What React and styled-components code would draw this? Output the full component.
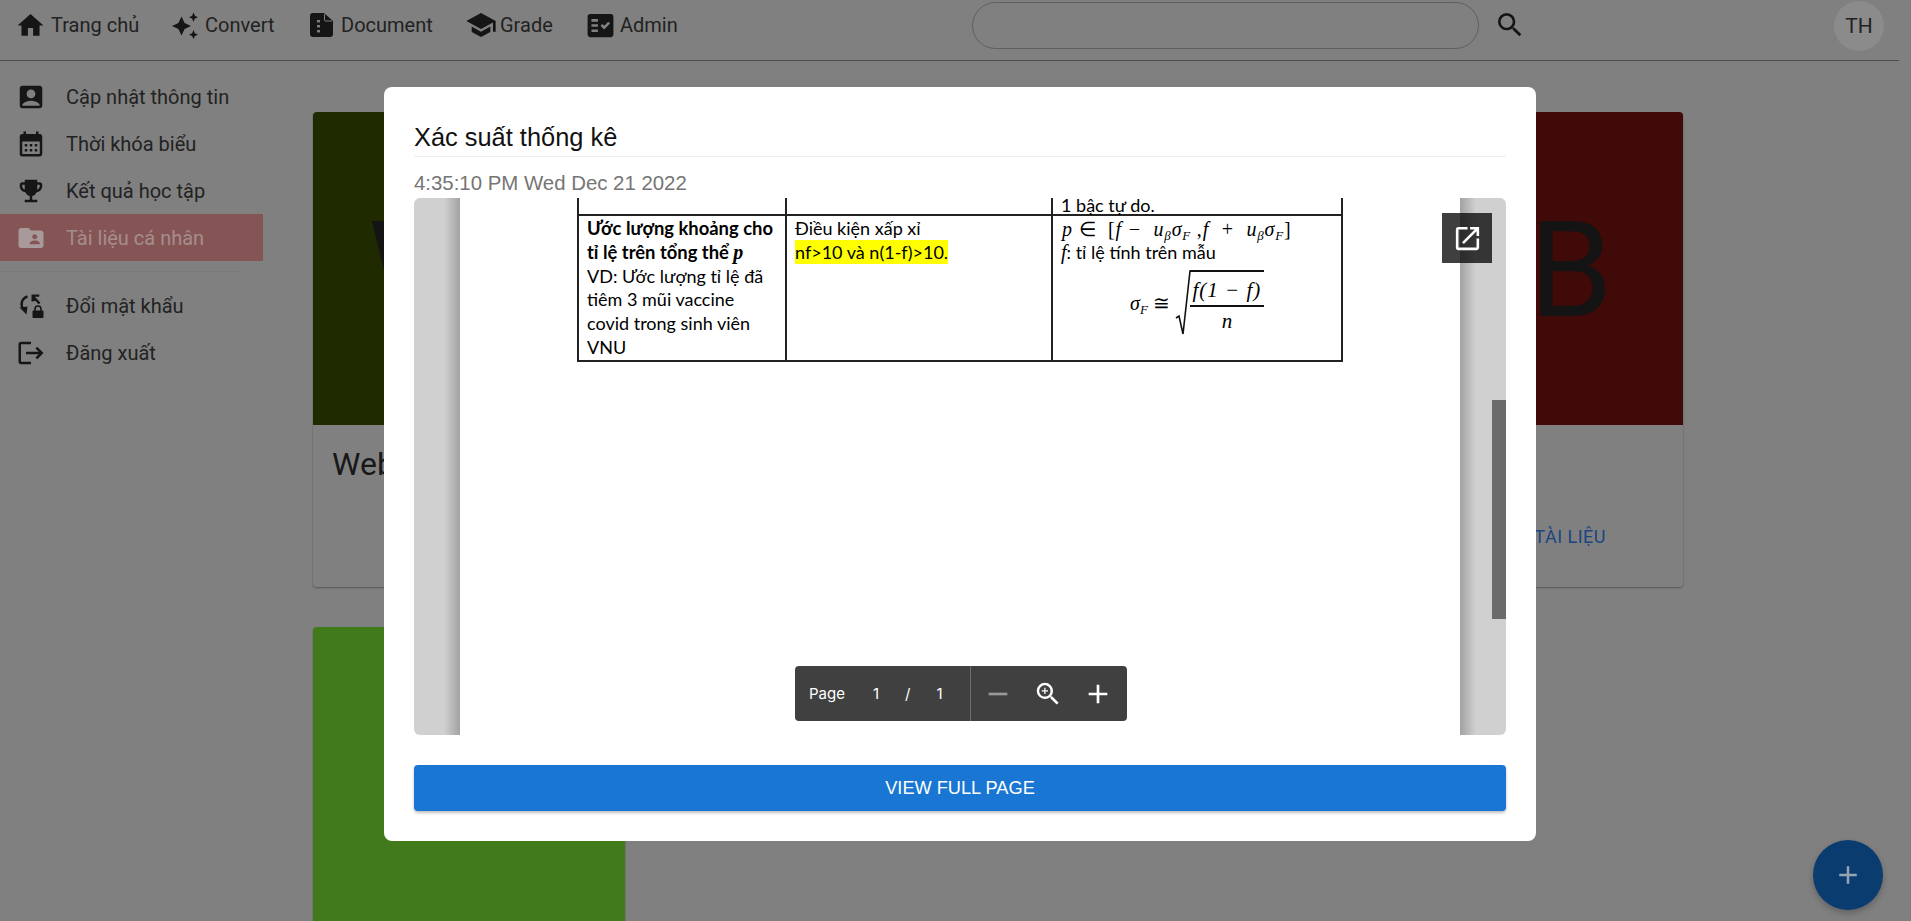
import React from "react";
import styled, { createGlobalStyle } from "styled-components";
import {
  MdHome, MdSchool, MdFactCheck, MdAccountBox, MdCalendarMonth,
  MdEmojiEvents, MdFolderShared, MdLogout, MdSearch, MdOpenInNew, MdZoomIn, MdRemove, MdAdd,
} from "react-icons/md";

const Global = createGlobalStyle`
  html, body { margin: 0; padding: 0; height: 100%; overflow: hidden; background: #808080; }
  * { box-sizing: border-box; }
  body { font-family: "Roboto", sans-serif; }
`;
const Page = styled.div`width: 1911px; height: 921px; overflow: hidden; display: flex; flex-direction: column;`;
const TopBar = styled.header`
  height: 61px; width: 1899px; flex: none; display: flex; align-items: center; padding: 0 0 10px 15px;
  border-bottom: 1px solid #4d4d4d;
`;
const NavGroup = styled.div`width: 957px; flex: none; display: flex; align-items: center;`;
const NavItem = styled.div`
  display: flex; align-items: center; width: ${p => p.$w}px; flex: none;
  color: #222; font: 400 20px "Roboto", sans-serif;
`;
const IconSlot = styled.span`
  display: flex; align-items: center; width: ${p => p.$w}px; flex: none; color: #151515;
  font-size: ${p => p.$size ?? 30}px;
`;
const SearchBox = styled.div`
  width: 507px; height: 47px; margin-top: 1px; flex: none;
  border: 1px solid #5f5f5f; border-radius: 24px;
`;
const SearchIcon = styled(MdSearch)`font-size: 32px; color: #141414; margin-left: 15px; flex: none;`;
const Avatar = styled.div`
  width: 50px; height: 50px; border-radius: 50%; background: #8b8b8b; color: #222; margin-left: 308px; margin-top: 1px;
  display: flex; align-items: center; justify-content: center; font: 400 21px "Roboto", sans-serif; flex: none;
`;
const Body = styled.div`flex: 1; display: flex; min-height: 0;`;
const Side = styled.nav`width: 313px; flex: none; padding-top: 12px;`;
const SideRow = styled.div`
  width: 263px; height: 47px; display: flex; align-items: center; padding-left: 16px; gap: 20px;
  font: 400 20px "Roboto", sans-serif; color: ${p => p.$active ? "#a58d8d" : "#222"};
  background: ${p => p.$active ? "#855555" : "transparent"};
  svg { font-size: 30px; color: ${p => p.$active ? "#a89a9a" : "#161616"}; flex: none; }
`;
const SideDivider = styled.div`height: 1px; width: 241px; background: #7a7a7a; margin: 10px 0;`;
const Grid = styled.main`
  flex: 1; display: grid; grid-template-columns: repeat(3, 529px); grid-auto-rows: 475px; row-gap: 40px; padding-top: 51px;
`;
const Card = styled.section`
  width: 312px; height: 475px; border-radius: 4px; overflow: hidden; background: #808080;
  box-shadow: 0 1px 2px rgba(0,0,0,.35); display: flex; flex-direction: column;
`;
const Cover = styled.div`
  height: 313px; flex: none; background: ${p => p.$bg}; color: #141414; display: flex; align-items: center;
  padding: 4px 0 0 ${p => p.$pad ?? 0}px; font: 400 134px "Roboto", sans-serif; line-height: 1;
`;
const CardTitle = styled.div`padding: 20px 19px 0; font: 400 32px "Roboto", sans-serif; color: #181818; height: 73px;`;
const CardAction = styled.div`
  display: flex; justify-content: flex-end; padding: 28px 77px 0 0; font: 400 18px "Roboto", sans-serif; letter-spacing: .5px; color: #1a4580;
`;
const Fab = styled.button`
  position: fixed; left: 1813px; top: 840px; width: 70px; height: 70px; border-radius: 50%; border: 0; padding: 0;
  background: #0b3c70; color: #96a5b3; display: flex; align-items: center; justify-content: center; font-size: 30px;
  box-shadow: 0 3px 6px rgba(0,0,0,.25);
`;
const Modal = styled.div`
  position: fixed; left: 384px; top: 87px; width: 1152px; height: 754px; background: #fff; border-radius: 8px;
  padding: 30px; display: flex; flex-direction: column;
`;
const ModalTitle = styled.h2`
  margin: 0; height: 40px; flex: none; border-bottom: 1px solid #eee; font: 400 25.4px "Liberation Sans", sans-serif; color: #111; line-height: 40px;
`;
const ModalDate = styled.div`height: 41px; flex: none; padding-top: 14px; font: 400 20.4px/24px "Liberation Sans", sans-serif; color: #757575;`;
const Viewer = styled.div`position: relative; height: 537px; flex: none; display: flex;`;
const Gutter = styled.div`
  width: 46px; flex: none;
  border-radius: ${p => p.$side === "left" ? "6px 0 0 6px" : "0 6px 6px 0"};
  background: linear-gradient(${p => p.$side === "left" ? "to left" : "to right"}, #a2a2a2, #d0d0d0 16px);
`;
const Sheet = styled.div`flex: 1; background: #fff; padding-left: 117px;`;
const Table = styled.table`
  border-collapse: collapse; table-layout: fixed; width: 764px; color: #000;
  font: 400 18px/23.8px "Lato", sans-serif;
  td { border: 2px solid #222; vertical-align: top; padding: 1px 8px 0; }
`;
const CutRow = styled.tr`
  height: 17px; td { border-top: 0; vertical-align: bottom; line-height: 14px; padding: 0 8px 2px; }
`;
const Bold = styled.div`font-weight: 700; font-size: 18.4px;`;
const Mark = styled.span`background: #ff0; padding: 1px 0;`;
const MathLine = styled.div`font: italic 400 20px/24px "Liberation Serif", serif; white-space: pre; letter-spacing: .8px; padding-left: 1px;`;
const MathInline = styled.span`font: italic ${p => p.$bold ? 700 : 400} 20px/1 "Liberation Serif", serif;`;
const Up = styled.span`font-style: normal;`;
const Sub = styled.sub`font-size: 13px; line-height: 0; vertical-align: -4px;`;
const Formula = styled.div`display: flex; justify-content: center; align-items: center; padding-top: 5px; gap: 5px;`;
const Sigma = styled.span`font: italic 400 20px "Liberation Serif", serif; white-space: pre;`;
const Radical = styled.div`position: relative; padding-left: 15px; height: 66px; display: flex;`;
const RadSign = styled.svg`position: absolute; left: 0; top: 0;`;
const Frac = styled.div`
  border-top: 2px solid #111; width: 74px; display: flex; flex-direction: column; align-items: center;
  font: italic 400 21px "Liberation Serif", serif;
`;
const Num = styled.div`height: 35px; width: 100%; line-height: 36px; text-align: center; border-bottom: 2px solid #111; white-space: nowrap; letter-spacing: 1px;`;
const Den = styled.div`line-height: 28px;`;
const Popout = styled.div`
  position: absolute; left: 1028px; top: 15px; width: 50px; height: 50px; background: rgba(11,11,11,.79);
  display: flex; align-items: center; justify-content: center; color: #fff; font-size: 31px;
`;
const ScrollThumb = styled.div`position: absolute; right: 0; top: 202px; width: 14px; height: 219px; background: #6b6b6b;`;
const Toolbar = styled.div`
  position: absolute; left: 381px; top: 468px; width: 332px; height: 55px; background: #404040; border-radius: 4px;
  display: flex; align-items: center; color: #fff; font: 400 15px "Inter", sans-serif;
`;
const PageInfo = styled.div`
  width: 176px; height: 100%; flex: none; border-right: 1px solid #6e6e6e; display: flex; align-items: center; padding-left: 14px;
`;
const PageNum = styled.span`margin-left: ${p => p.$ml}px;`;
const ToolIcons = styled.div`
  display: grid; grid-template-columns: repeat(3, 50px); padding-left: 2px; justify-items: center; align-items: center; font-size: 32px;
`;
const MinusIcon = styled(MdRemove)`color: #999;`;
const ZoomIcon = styled(MdZoomIn)`font-size: 30px;`;
const ViewButton = styled.button`
  margin-top: 30px; height: 46px; flex: none; border: 0; border-radius: 4px; background: #1976d2; color: #fff;
  font: 400 18.2px "Liberation Sans", sans-serif; box-shadow: 0 2px 3px rgba(0,0,0,.25);
`;

const SparkleIcon = () => (
  <svg width="26" height="27" viewBox="0 0 26 27" fill="currentColor">
    <path d="M9.5 4.5 L12.6 10.9 L19 14 L12.6 17.1 L9.5 23.5 L6.4 17.1 L0 14 L6.4 10.9Z" />
    <path d="M21.5 0.5 L22.9 3.8 L26 5.2 L22.9 6.6 L21.5 10 L20.1 6.6 L17 5.2 L20.1 3.8Z" />
    <path d="M21.5 18 L22.9 21.3 L26 22.7 L22.9 24.1 L21.5 27 L20.1 24.1 L17 22.7 L20.1 21.3Z" />
  </svg>
);
const DocIcon = () => (
  <svg width="23" height="24" viewBox="0 0 23 24" fill="currentColor">
    <path d="M3 0 H14 L23 8 V21 a3 3 0 0 1 -3 3 H3 a3 3 0 0 1 -3 -3 V3 a3 3 0 0 1 3 -3Z" />
    <path d="M14.5 1 V7 a1 1 0 0 0 1 1 H22" fill="none" stroke="#808080" strokeWidth="1" />
    <rect x="7" y="7" width="3" height="2.4" fill="#808080" />
    <rect x="7" y="12" width="3" height="2.4" fill="#808080" />
    <rect x="7" y="17" width="3" height="2.4" fill="#808080" />
  </svg>
);
const LockSwapIcon = () => (
  <svg width="30" height="30" viewBox="-2.5 -3.5 30 30" fill="currentColor">
    <path d="M9 2 C3 4 1.5 10 5 15" fill="none" stroke="currentColor" strokeWidth="2.4" />
    <path d="M1 13 L9 12 L8 20Z" />
    <path d="M21 9 L16 3.5" fill="none" stroke="currentColor" strokeWidth="2.6" />
    <path d="M13 0 H21 L20.5 2.2 H16.5 V6.5 L13 7Z" />
    <rect x="14" y="16" width="11" height="7.5" rx="1" />
    <path d="M16.5 16.5 V14.5 a3 3 0 0 1 6 0 V16.5" fill="none" stroke="currentColor" strokeWidth="1.6" />
  </svg>
);

const NAV = [
  { icon: <MdHome />, label: "Trang chủ", w: 157, slot: 36, size: 31 },
  { icon: <SparkleIcon />, label: "Convert", w: 138, slot: 33 },
  { icon: <DocIcon />, label: "Document", w: 155, slot: 31 },
  { icon: <MdSchool />, label: "Grade", w: 120, slot: 35, size: 32 },
  { icon: <MdFactCheck />, label: "Admin", w: 120, slot: 35, size: 31 },
];

export default function App() {
  return (
    <Page>
      <Global />
      <TopBar>
        <NavGroup>
          {NAV.map(n => (
            <NavItem key={n.label} $w={n.w}>
              <IconSlot $w={n.slot} $size={n.size}>{n.icon}</IconSlot>
              {n.label}
            </NavItem>
          ))}
        </NavGroup>
        <SearchBox />
        <SearchIcon />
        <Avatar>TH</Avatar>
      </TopBar>
      <Body>
        <Side>
          <SideRow><MdAccountBox />Cập nhật thông tin</SideRow>
          <SideRow><MdCalendarMonth />Thời khóa biểu</SideRow>
          <SideRow><MdEmojiEvents />Kết quả học tập</SideRow>
          <SideRow $active><MdFolderShared />Tài liệu cá nhân</SideRow>
          <SideDivider />
          <SideRow><LockSwapIcon />Đổi mật khẩu</SideRow>
          <SideRow><MdLogout />Đăng xuất</SideRow>
        </Side>
        <Grid>
          <Card>
            <Cover $bg="#1f2a00" $pad={55}>W</Cover>
            <CardTitle>Web</CardTitle>
          </Card>
          <div />
          <Card>
            <Cover $bg="#3f0a08" $pad={158}>B</Cover>
            <CardTitle />
            <CardAction>TÀI LIỆU</CardAction>
          </Card>
          <Card><Cover $bg="#417a1a" /></Card>
        </Grid>
      </Body>
      <Fab><MdAdd /></Fab>
      <Modal>
        <ModalTitle>Xác suất thống kê</ModalTitle>
        <ModalDate>4:35:10 PM Wed Dec 21 2022</ModalDate>
        <Viewer>
          <Gutter $side="left" />
          <Sheet>
            <Table>
              <colgroup><col width="208" /><col width="266" /><col width="290" /></colgroup>
              <tbody>
                <CutRow><td /><td /><td>1 bậc tự do.</td></CutRow>
                <tr>
                  <td>
                    <Bold>Ước lượng khoảng cho<br />tỉ lệ trên tổng thể <MathInline $bold>p</MathInline></Bold>
                    VD: Ước lượng tỉ lệ đã<br />tiêm 3 mũi vaccine<br />covid trong sinh viên<br />VNU
                  </td>
                  <td>Điều kiện xấp xỉ<br /><Mark>nf&gt;10 và n(1-f)&gt;10.</Mark></td>
                  <td>
                    <MathLine>{"p "}<Up>{"∈  ["}</Up>{"f −  u"}<Sub>β</Sub>σ<Sub>F</Sub><Up>{" ,"}</Up>{"f  +  u"}<Sub>β</Sub>σ<Sub>F</Sub><Up>]</Up></MathLine>
                    <div><MathInline>f</MathInline>: tỉ lệ tính trên mẫu</div>
                    <Formula>
                      <Sigma>σ<Sub>F</Sub><Up>{" ≅"}</Up></Sigma>
                      <Radical>
                        <RadSign width="16" height="66" viewBox="0 0 16 66">
                          <path d="M1 48 L4 46 L8 64 L15 1 L16 1" fill="none" stroke="#111" strokeWidth="1.6" />
                        </RadSign>
                        <Frac><Num>f(1 − f)</Num><Den>n</Den></Frac>
                      </Radical>
                    </Formula>
                  </td>
                </tr>
              </tbody>
            </Table>
          </Sheet>
          <Gutter $side="right" />
          <Popout><MdOpenInNew /></Popout>
          <ScrollThumb />
          <Toolbar>
            <PageInfo>Page<PageNum $ml={28}>1</PageNum><PageNum $ml={26}>/</PageNum><PageNum $ml={26}>1</PageNum></PageInfo>
            <ToolIcons><MinusIcon /><ZoomIcon /><MdAdd /></ToolIcons>
          </Toolbar>
        </Viewer>
        <ViewButton>VIEW FULL PAGE</ViewButton>
      </Modal>
    </Page>
  );
}
